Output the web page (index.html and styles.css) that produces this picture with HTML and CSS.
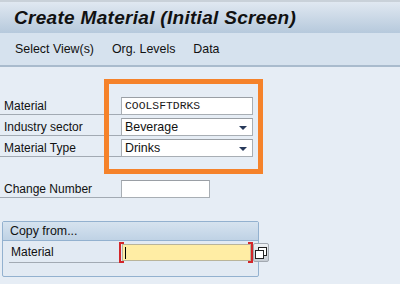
FILE: index.html
```html
<!DOCTYPE html>
<html lang="en">
<head>
    <meta charset="UTF-8">
    <meta name="viewport" content="width=device-width, initial-scale=1.0">
    <title>Create Material (Initial Screen)</title>
    <link rel="stylesheet" href="styles.css">
</head>
<body>
    <div class="title-bar">
        <h1>Create Material (Initial Screen)</h1>
    </div>

    <div class="toolbar">
        <span>Select View(s)</span>
        <span>Org. Levels</span>
        <span>Data</span>
    </div>

    <div class="content">
        <div class="fields">
            <div class="row">
                <label>Material</label>
                <div class="field mono">COOLSFTDRKS</div>
            </div>
            <div class="row">
                <label>Industry sector</label>
                <div class="field select">Beverage<span class="arrow"></span></div>
            </div>
            <div class="row">
                <label>Material Type</label>
                <div class="field select">Drinks<span class="arrow"></span></div>
            </div>
            <div class="highlight"></div>
        </div>

        <div class="row change-row">
            <label>Change Number</label>
            <div class="field short"></div>
        </div>

        <div class="group">
            <div class="group-head">Copy from...</div>
            <div class="group-body">
                <div class="row">
                    <label>Material</label>
                    <div class="required">
                        <div class="field yellow"><span class="caret"></span></div>
                    </div>
                    <button class="f4-button">
                        <svg width="12" height="12" viewBox="0 0 12 12">
                            <rect x="3.5" y="0.5" width="8" height="8" fill="#fff" stroke="#222"/>
                            <rect x="0.5" y="3.5" width="8" height="8" fill="#fff" stroke="#222"/>
                        </svg>
                    </button>
                </div>
            </div>
        </div>
    </div>
</body>
</html>
```

FILE: styles.css
```css
body {
    margin: 0;
    padding: 0;
    width: 400px;
    height: 284px;
    overflow: hidden;
    font-family: "Liberation Sans", Arial, sans-serif;
    font-size: 12px;
    color: #111;
    background-color: #e6edf5;
}

.title-bar {
    height: 31px;
    border-top: 2px solid #c9d1d9;
    background: linear-gradient(#e0e8f1, #b6c9dc);
    display: flex;
    align-items: center;
    padding-left: 14px;
}

.title-bar h1 {
    margin: 0;
    font-size: 19px;
    font-weight: bold;
    font-style: italic;
    letter-spacing: 0.3px;
    color: #111;
}

.toolbar {
    height: 32px;
    background-color: #d6e2ee;
    border-bottom: 2px solid #a9bbcd;
    display: flex;
    align-items: center;
    gap: 18px;
    padding-left: 15px;
    font-size: 12.4px;
}

.content {
    padding-top: 30px;
}

.fields {
    position: relative;
    display: flex;
    flex-direction: column;
    gap: 3px;
}

.row {
    display: flex;
    align-items: stretch;
    height: 18px;
}

.row > * {
    flex-shrink: 0;
}

.row label {
    width: 121px;
    padding-left: 4px;
    line-height: 18px;
    border-bottom: 1px solid #a2aab3;
    box-sizing: border-box;
}

.field {
    width: 132px;
    height: 18px;
    box-sizing: border-box;
    border: 1px solid #a8aeb4;
    border-top-color: #9a9fa5;
    background-color: #fff;
    padding-left: 3px;
    line-height: 16px;
    position: relative;
}

.mono {
    font-family: "Liberation Mono", "Courier New", monospace;
    font-size: 11.4px;
    color: #1a1a1a;
}

.select {
    font-size: 12.4px;
}

.arrow {
    position: absolute;
    right: 5px;
    top: 7px;
    border-left: 4px solid transparent;
    border-right: 4px solid transparent;
    border-top: 4px solid #27395a;
}

.highlight {
    position: absolute;
    left: 104px;
    top: -18px;
    width: 159px;
    height: 95px;
    box-sizing: border-box;
    border: 5px solid #f5822a;
    pointer-events: none;
}

.change-row {
    margin-top: 23px;
}

.field.short {
    width: 89px;
}

.group {
    margin: 23px 0 0 2px;
    width: 257px;
    box-sizing: border-box;
    border: 1px solid #93b1cf;
    border-radius: 2px;
    background-color: #e2eaf3;
}

.group-head {
    height: 18px;
    line-height: 18px;
    padding-left: 7px;
    font-size: 12.4px;
    background: linear-gradient(#d6e3ef, #bfd2e5);
    border-bottom: 1px solid #93b1cf;
}

.group-body {
    padding: 1px 0 13px 6px;
}

.group-body .row {
    height: 21px;
}

.group-body label {
    width: 110px;
    padding-left: 2px;
    line-height: 20px;
}

.required {
    position: relative;
    padding: 2px 2px 2px 3px;
}

.required::before,
.required::after {
    content: "";
    position: absolute;
    top: 0;
    bottom: 0;
    width: 3px;
    border: 2px solid #d3262a;
}

.required::before {
    left: 0;
    border-right: none;
}

.required::after {
    right: 0;
    border-left: none;
}

.field.yellow {
    width: 129px;
    height: 17px;
    background-color: #ffeda4;
    border-color: #b9b49a;
}

.caret {
    position: absolute;
    left: 2px;
    top: 2px;
    width: 1px;
    height: 12px;
    background-color: #000;
}

.f4-button {
    margin: 1px 0 0 0;
    width: 16px;
    height: 19px;
    padding: 0;
    display: flex;
    align-items: center;
    justify-content: center;
    border: 1px solid #a3a9b1;
    border-radius: 2px;
    background: linear-gradient(#eef1f4, #c6ccd3);
}
```
